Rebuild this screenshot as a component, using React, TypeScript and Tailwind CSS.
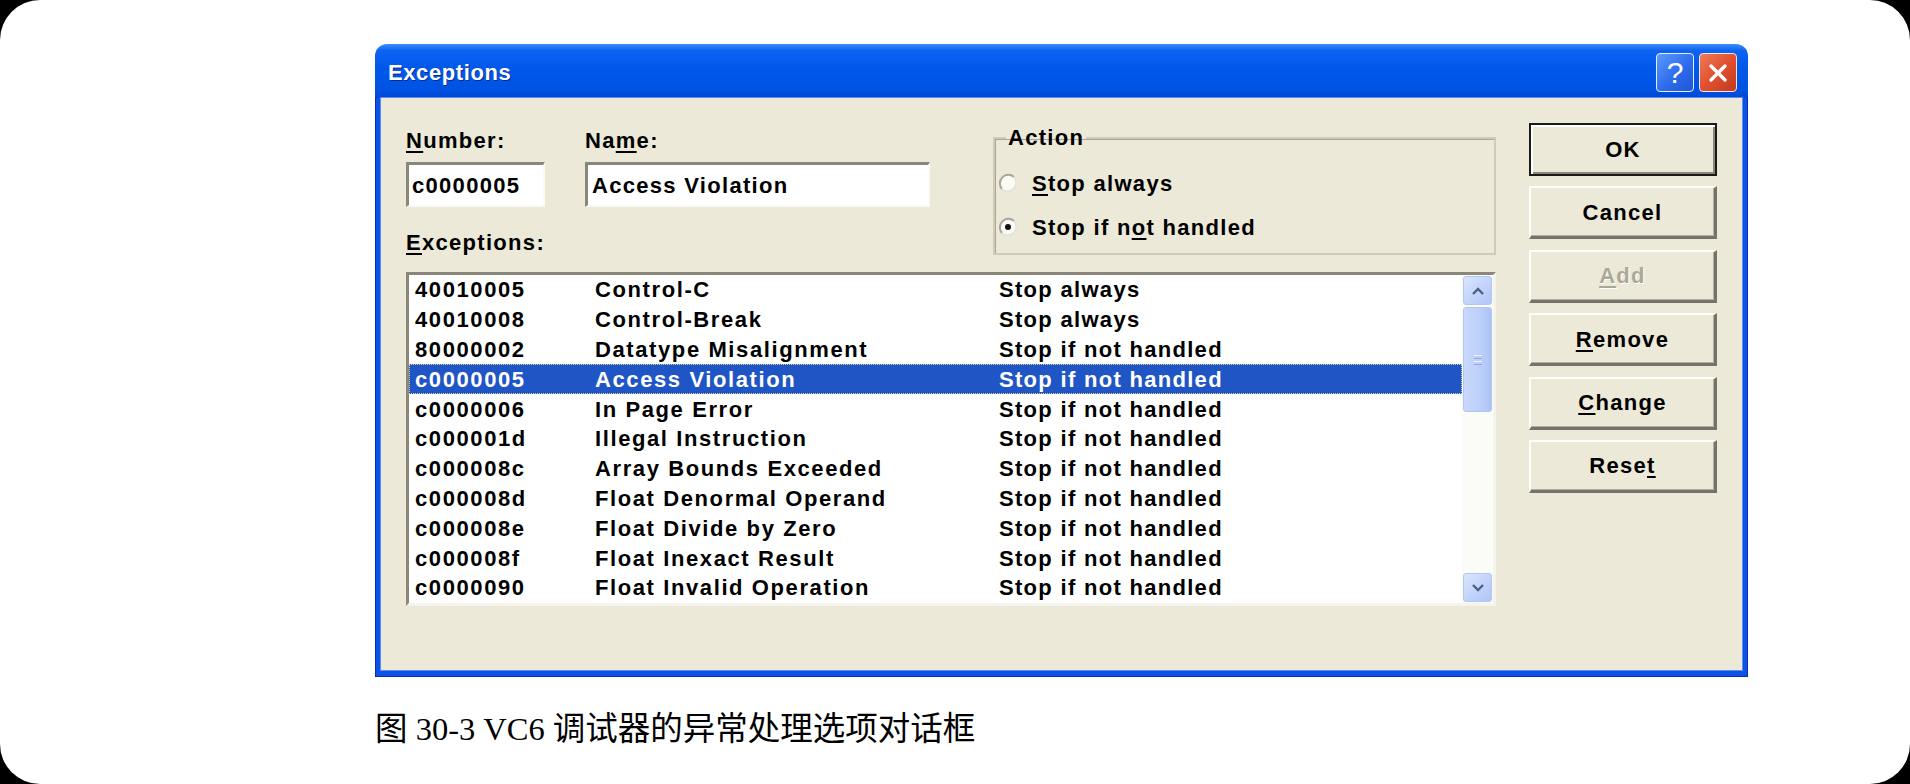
import React from "react";

const rows: [string, string, string][] = [
    ["40010005", "Control-C", "Stop always"],
    ["40010008", "Control-Break", "Stop always"],
    ["80000002", "Datatype Misalignment", "Stop if not handled"],
    ["c0000005", "Access Violation", "Stop if not handled"],
    ["c0000006", "In Page Error", "Stop if not handled"],
    ["c000001d", "Illegal Instruction", "Stop if not handled"],
    ["c000008c", "Array Bounds Exceeded", "Stop if not handled"],
    ["c000008d", "Float Denormal Operand", "Stop if not handled"],
    ["c000008e", "Float Divide by Zero", "Stop if not handled"],
    ["c000008f", "Float Inexact Result", "Stop if not handled"],
    ["c0000090", "Float Invalid Operation", "Stop if not handled"],
];

const U = ({ children }: { children: React.ReactNode }) => (
    <span className="underline decoration-2 underline-offset-[3px]">{children}</span>
);

const Radio = ({ checked }: { checked?: boolean }) => (
    <svg width="20" height="20" viewBox="0 0 20 20" className="shrink-0">
        <circle cx="10" cy="10" r="8.5" fill="#fafaf6" />
        <path d="M4 16 A8.5 8.5 0 0 1 16 4" fill="none" stroke="#a9a697" strokeWidth="2" />
        <path d="M16 4 A8.5 8.5 0 0 1 4 16" fill="none" stroke="#e4e2d8" strokeWidth="1.6" />
        {checked && <circle cx="10" cy="10" r="3" fill="#111" />}
    </svg>
);

const DlgButton = ({ children, isDefault, disabled }: { children: React.ReactNode; isDefault?: boolean; disabled?: boolean }) => (
    <div
        className={
            "flex h-[53px] items-center justify-center bg-[#ece9d8] " +
            (isDefault
                ? "border-2 border-[#1a1a1a] shadow-[inset_2px_2px_0_#ffffff,inset_-2px_-2px_0_#8a877a]"
                : "border-t-2 border-l-2 border-b-[3px] border-r-[3px] border-t-[#fdfdfb] border-l-[#fdfdfb] border-b-[#75736a] border-r-[#75736a] shadow-[inset_-1px_-1px_0_#b3b0a2]")
        }
    >
        <span
            className={
                "text-[22px] font-bold tracking-[1.3px] " +
                (disabled ? "text-[#aca899] [text-shadow:1px_1px_0_#ffffff]" : "text-black")
            }
        >
            {children}
        </span>
    </div>
);

const ScrollBtn = ({ up }: { up?: boolean }) => (
    <div className="flex h-[29px] w-[29px] items-center justify-center rounded-[3px] border border-[#b2c6f3] bg-[linear-gradient(135deg,#dbe6fe_0%,#c4d5fb_50%,#b1c6f6_100%)]">
        <svg width="14" height="10" viewBox="0 0 14 10">
            <polyline
                points={up ? "2,8 7,3 12,8" : "2,2 7,7 12,2"}
                fill="none"
                stroke="#4d6185"
                strokeWidth="2.4"
            />
        </svg>
    </div>
);

function Dialog() {
    return (
        <div className="w-[1373px] overflow-hidden rounded-t-[12px] font-['Liberation_Sans',Arial,sans-serif]">
            {/* caption */}
            <div className="flex h-[54px] items-start justify-between bg-[linear-gradient(to_bottom,#3d8ff9_0%,#0d63f2_12%,#0058ea_45%,#0053e3_85%,#0046d2_100%)] pl-[13px] pr-[11px]">
                <span className="mt-[17px] text-[22px] leading-[24px] font-bold tracking-[0.6px] text-white [text-shadow:1px_1px_0_#0b2a8c]">
                    Exceptions
                </span>
                <div className="mt-[9px] flex gap-[5px]">
                    <div className="flex h-[39px] w-[38px] items-center justify-center rounded-[4px] border border-[#e6eefc] bg-[linear-gradient(135deg,#5b9bfb_0%,#2d6cec_55%,#1e55d8_100%)]">
                        <span className="text-[30px] leading-none text-white">?</span>
                    </div>
                    <div className="flex h-[39px] w-[38px] items-center justify-center rounded-[4px] border border-[#f3e6e2] bg-[linear-gradient(135deg,#ee7c5a_0%,#e0502f_50%,#c23a1d_100%)]">
                        <svg width="22" height="22" viewBox="0 0 22 22">
                            <path d="M4 4 L18 18 M18 4 L4 18" stroke="#fff" strokeWidth="3.4" strokeLinecap="round" />
                        </svg>
                    </div>
                </div>
            </div>

            {/* frame */}
            <div className="border-x border-b border-[#0a2bb0] bg-[#0b52e6] px-[5px] pb-[6px]">
                <div className="flex h-[572px] bg-[#ece9d8] shadow-[0_0_0_1px_#5a8df2] text-black">
                    {/* left area */}
                    <div className="w-[1115px] pl-[25px] pt-[30px]">
                        <div className="flex w-[1090px] items-start">
                            <div>
                                <div className="flex">
                                    <div className="w-[139px]">
                                        <div className="mt-[1px] text-[22px] leading-[24px] font-bold tracking-[1.3px]">
                                            <U>N</U>umber:
                                        </div>
                                        <div className="mt-[9px] flex h-[45px] items-center border-t-[3px] border-l-[3px] border-r-2 border-b-2 border-t-[#8a877a] border-l-[#8a877a] border-r-[#fbfaf6] border-b-[#fbfaf6] bg-white pl-[3px] text-[22px] font-bold tracking-[1.3px]">
                                            c0000005
                                        </div>
                                    </div>
                                    <div className="ml-[40px] w-[345px]">
                                        <div className="mt-[1px] text-[22px] leading-[24px] font-bold tracking-[1.3px]">
                                            Na<U>m</U>e:
                                        </div>
                                        <div className="mt-[9px] flex h-[45px] items-center border-t-[3px] border-l-[3px] border-r-2 border-b-2 border-t-[#8a877a] border-l-[#8a877a] border-r-[#fbfaf6] border-b-[#fbfaf6] bg-white pl-[4px] text-[22px] font-bold tracking-[1.3px]">
                                            Access Violation
                                        </div>
                                    </div>
                                </div>
                                <div className="mt-[24px] text-[22px] leading-[24px] font-bold tracking-[1.3px]">
                                    <U>E</U>xceptions:
                                </div>
                            </div>

                            <fieldset className="ml-auto h-[127px] w-[503px] border-2 border-[#cfcbb8] shadow-[inset_1px_1px_0_#a9a696] p-0">
                                <legend className="ml-[11px] px-[2px] text-[22px] leading-[20px] font-bold tracking-[1.3px]">
                                    Action
                                </legend>
                                <div className="pt-[13px] pl-[3px]">
                                    <div className="flex h-[44px] items-center gap-[14px]">
                                        <Radio />
                                        <span className="text-[22px] font-bold tracking-[1.3px]">
                                            <U>S</U>top always
                                        </span>
                                    </div>
                                    <div className="flex h-[44px] items-center gap-[14px]">
                                        <Radio checked />
                                        <span className="text-[22px] font-bold tracking-[1.3px]">
                                            Stop if n<U>o</U>t handled
                                        </span>
                                    </div>
                                </div>
                            </fieldset>
                        </div>

                        {/* list */}
                        <div className="mt-[17px] flex h-[334px] w-[1090px] border-[3px] border-t-[#8a877a] border-l-[#8a877a] border-r-[#f4f3ee] border-b-[#f4f3ee] bg-white">
                            <div className="flex-1 overflow-hidden">
                                {rows.map(([code, name, action], i) => {
                                    const sel = i === 3;
                                    return (
                                        <div
                                            key={code}
                                            className={
                                                "flex h-[29.8px] items-center pl-[6px] text-[22px] font-bold tracking-[1.6px] " +
                                                (sel
                                                    ? "bg-[#1f55c4] text-white outline-1 outline-dotted outline-[#d9d2a8] -outline-offset-1"
                                                    : "text-black")
                                            }
                                        >
                                            <span className="w-[180px] shrink-0">{code}</span>
                                            <span className="w-[404px] shrink-0">{name}</span>
                                            <span className="tracking-[1.3px]">{action}</span>
                                        </div>
                                    );
                                })}
                            </div>
                            <div className="flex w-[31px] flex-col items-center bg-[#fbfbf8] pt-[1px] pb-[1px]">
                                <ScrollBtn up />
                                <div className="mt-[2px] flex h-[105px] w-[29px] items-center justify-center rounded-[3px] border border-[#b2c6f3] bg-[linear-gradient(90deg,#c9d8fc_0%,#bccffa_60%,#adc3f5_100%)]">
                                    <div className="flex flex-col gap-[2px]">
                                        <div className="h-px w-[8px] bg-[#eef3fe]" />
                                        <div className="h-px w-[8px] bg-[#8faaea]" />
                                        <div className="h-px w-[8px] bg-[#eef3fe]" />
                                        <div className="h-px w-[8px] bg-[#8faaea]" />
                                    </div>
                                </div>
                                <div className="flex-1" />
                                <ScrollBtn />
                            </div>
                        </div>
                    </div>

                    {/* buttons */}
                    <div className="ml-[33px] flex w-[188px] flex-col gap-[10.4px] pt-[25px]">
                        <DlgButton isDefault>OK</DlgButton>
                        <DlgButton>Cancel</DlgButton>
                        <DlgButton disabled>
                            <U>A</U>dd
                        </DlgButton>
                        <DlgButton>
                            <U>R</U>emove
                        </DlgButton>
                        <DlgButton>
                            <U>C</U>hange
                        </DlgButton>
                        <DlgButton>
                            Rese<U>t</U>
                        </DlgButton>
                    </div>
                </div>
            </div>
        </div>
    );
}

export default function App() {
    return (
        <div className="h-[784px] w-[1910px] bg-black">
            <div className="h-[784px] w-[1910px] rounded-[40px] bg-white pl-[375px] pt-[44px]">
                <Dialog />
                <p className="mt-[32px] text-[32.5px] leading-[40px] text-black font-['Liberation_Serif','Noto_Sans_CJK_SC',serif]">
                    图 30-3 VC6 调试器的异常处理选项对话框
                </p>
            </div>
        </div>
    );
}
